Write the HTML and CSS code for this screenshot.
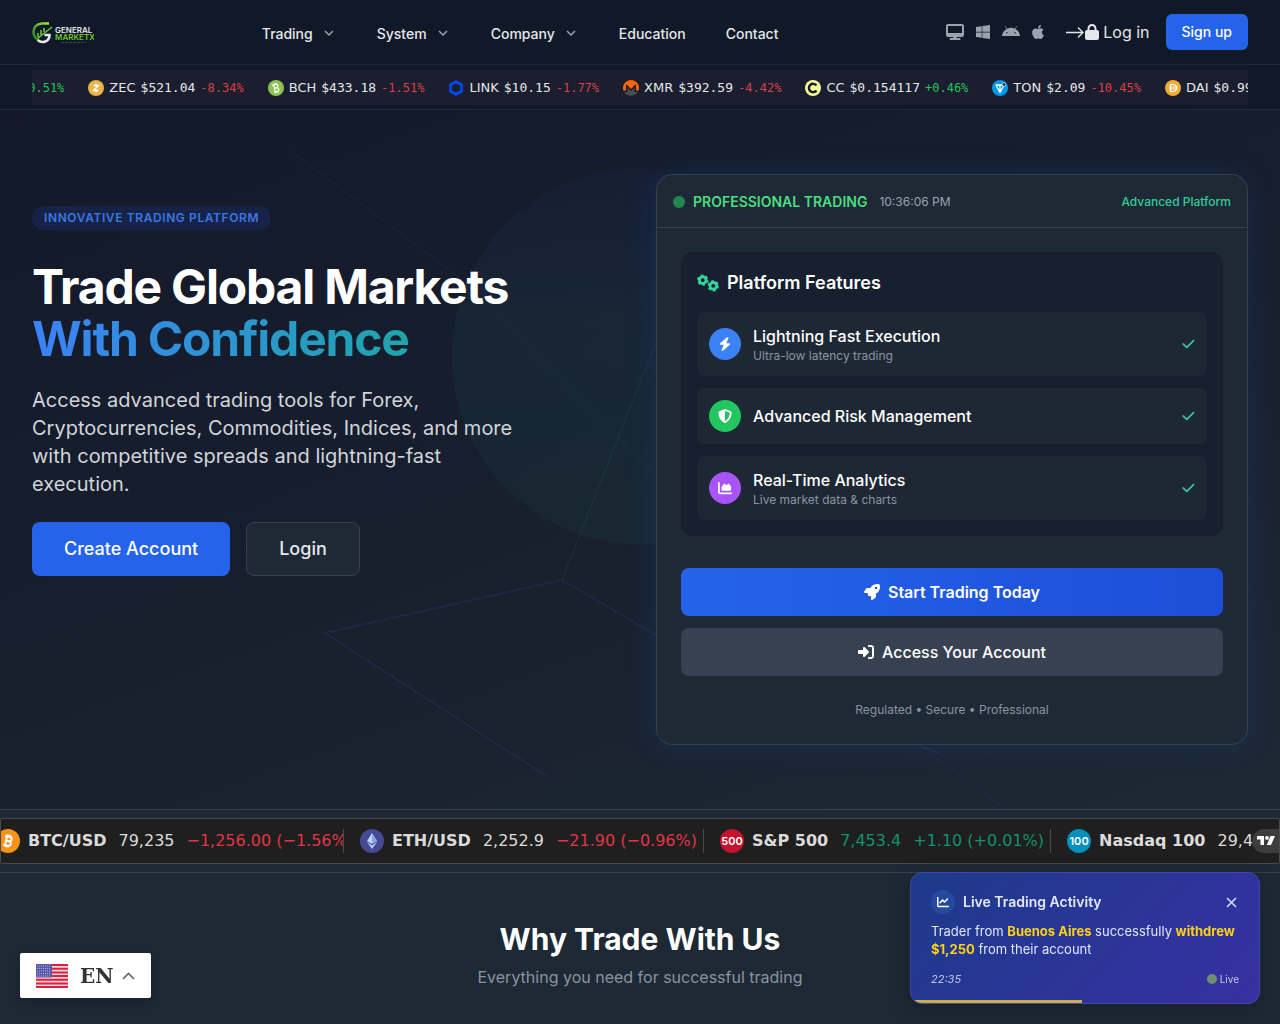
FILE: index.html
```html
<!DOCTYPE html>
<html lang="en">
<head>
  <meta charset="UTF-8">
  <meta name="viewport" content="width=device-width, initial-scale=1.0">
  <title>General MarketX</title>
  <link rel="stylesheet" href="styles.css">
</head>
<body>
  <header class="header">
    <a href="#" class="logo" aria-label="General MarketX">
      <svg width="62" height="24" viewBox="0 0 62 24">
        <defs>
          <linearGradient id="logoGreen" x1="0" y1="1" x2="1" y2="0">
            <stop offset="0" stop-color="#1f7a2e"/>
            <stop offset="1" stop-color="#a3e635"/>
          </linearGradient>
        </defs>
        <path d="M17 3.500H10C4 4 1.500 8 1.500 12c0 4 2 6 4 7.500" fill="none" stroke="url(#logoGreen)" stroke-width="2.600"/>
        <path d="M5.500 20c5 4 12 1.500 12-5h-5" fill="none" stroke="#e5e7eb" stroke-width="2.600"/>
        <path d="M6 17v-4M9 15v-5M12 12V8M5 19L20 7" stroke="#65c32f" stroke-width="1.600"/>
        <text x="23" y="13" class="logo-name">GENERAL</text>
        <text x="23" y="20" class="logo-name logo-sub">MARKETX</text>
        <path d="M29 22.500h25" stroke="#3b4252" stroke-width="1" stroke-dasharray="3 1"/>
      </svg>
    </a>
    <nav class="nav">
      <a href="#">Trading <svg class="caret" viewBox="0 0 16 16"><path d="M4 5l4 4 4-4"/></svg></a>
      <a href="#">System <svg class="caret" viewBox="0 0 16 16"><path d="M4 5l4 4 4-4"/></svg></a>
      <a href="#">Company <svg class="caret" viewBox="0 0 16 16"><path d="M4 5l4 4 4-4"/></svg></a>
      <a href="#">Education</a>
      <a href="#">Contact</a>
    </nav>
    <div class="actions">
      <div class="platforms">
        <a href="#" aria-label="Desktop"><svg width="18" height="16" viewBox="0 0 576 512"><path fill-rule="evenodd" d="M64 0C28.700 0 0 28.700 0 64V352c0 35.300 28.700 64 64 64H240l-11 32H144c-18 0-32 14-32 32s14 32 32 32H432c18 0 32-14 32-32s-14-32-32-32H347l-11-32H512c35.300 0 64-28.700 64-64V64c0-35.300-28.700-64-64-64H64zM512 64V288H64V64H512z"/></svg></a>
        <a href="#" aria-label="Windows"><svg width="14" height="16" viewBox="0 0 448 512"><path d="M0 93.700l183.600-25.300v177.400H0V93.700zm0 324.600l183.600 25.300V268.400H0v149.900zm203.800 28L448 480V268.400H203.800v177.900zm0-380.600v180.100H448V32L203.800 65.700z"/></svg></a>
        <a href="#" aria-label="Android"><svg width="18" height="16" viewBox="0 0 576 512"><path d="M420.550,301.930a24,24,0,1,1,24-24,24,24,0,0,1-24,24m-265.100,0a24,24,0,1,1,24-24,24,24,0,0,1-24,24m273.700-144.480,47.940-83a10,10,0,1,0-17.270-10h0l-48.540,84.070a301.250,301.250,0,0,0-246.560,0L116.180,64.450a10,10,0,1,0-17.270,10h0l47.940,83C64.530,202.220,8.240,285.550,0,384H576c-8.240-98.450-64.540-181.780-146.850-226.550"/></svg></a>
        <a href="#" aria-label="Apple"><svg width="12" height="16" viewBox="0 0 384 512"><path d="M318.700 268.700c-.2-36.700 16.400-64.400 50-84.800-18.800-26.900-47.200-41.700-84.700-44.600-35.500-2.800-74.300 20.700-88.500 20.700-15 0-49.400-19.700-76.400-19.700C63.300 141.200 4 184.800 4 273.500q0 39.300 14.400 81.200c12.800 36.700 59 126.700 107.200 125.200 25.200-.6 43-17.900 75.800-17.900 31.800 0 48.300 17.900 76.400 17.900 48.600-.7 90.400-82.500 102.600-119.300-65.200-30.700-61.700-90-61.700-91.900zm-56.600-164.200c27.300-32.400 24.800-61.900 24-72.500-24.100 1.400-52 16.400-67.900 34.900-17.500 19.800-27.800 44.300-25.600 71.900 26.100 2 49.900-11.400 69.500-34.300z"/></svg></a>
      </div>
      <a href="#" class="login">
        <svg width="20" height="16" viewBox="0 0 20 16"><path d="M1 8.500h17M13 3.500l5 5-5 5" fill="none" stroke="#e5e7eb" stroke-width="1.300"/></svg>
        <svg width="14" height="16" viewBox="0 0 448 512"><path fill="#e5e7eb" d="M144 144v48H304V144c0-44.200-35.800-80-80-80s-80 35.800-80 80zM80 192V144C80 64.500 144.500 0 224 0s144 64.500 144 144v48h16c35.300 0 64 28.700 64 64V448c0 35.300-28.700 64-64 64H64c-35.300 0-64-28.700-64-64V256c0-35.300 28.700-64 64-64H80z"/></svg>
        <span>Log in</span>
      </a>
      <a href="#" class="signup">Sign up</a>
    </div>
  </header>

  <div class="crypto-bar">
    <div class="crypto-window">
      <div class="crypto-track">
        <div class="coin"><span class="chg up">+0.51%</span></div>
        <div class="coin">
          <svg viewBox="0 0 16 16"><circle cx="8" cy="8" r="8" fill="#ecb244"/><path d="M5.500 5.500h5L5.500 10.500h5M8 3.500v2M8 10.500v2" fill="none" stroke="#fff" stroke-width="1.500"/></svg>
          <span>ZEC</span><span class="price">$521.04</span><span class="chg down">-8.34%</span>
        </div>
        <div class="coin">
          <svg viewBox="0 0 16 16"><circle cx="8" cy="8" r="8" fill="#8dc351"/><path transform="rotate(-14 8 8)" d="M5 4.500h3.500a1.700 1.700 0 0 1 0 3.500H6.500M8.500 8a1.800 1.800 0 0 1 0 3.600H5M6.500 4.500v7M7 3v1.500M9 3v1.500M7 11.500V13M9 11.500V13" fill="none" stroke="#fff" stroke-width="1.200"/></svg>
          <span>BCH</span><span class="price">$433.18</span><span class="chg down">-1.51%</span>
        </div>
        <div class="coin">
          <svg viewBox="0 0 16 16"><path d="M8 1.700l5.500 3.200v6.200L8 14.300l-5.500-3.200V4.900z" fill="none" stroke="#0847f7" stroke-width="2.800"/></svg>
          <span>LINK</span><span class="price">$10.15</span><span class="chg down">-1.77%</span>
        </div>
        <div class="coin">
          <svg viewBox="0 0 16 16"><path d="M8 0a8 8 0 0 0-7.600 10.500H3V4l5 5 5-5v6.500h2.600A8 8 0 0 0 8 0z" fill="#f60"/><path d="M1.200 12H4.500V7.500L8 11l3.500-3.500V12h3.300A8 8 0 0 1 1.200 12z" fill="#4c4c4c"/></svg>
          <span>XMR</span><span class="price">$392.59</span><span class="chg down">-4.42%</span>
        </div>
        <div class="coin">
          <svg viewBox="0 0 16 16"><circle cx="8" cy="8" r="8" fill="#f3ff97"/><path d="M11.500 5.500a4.200 4.200 0 1 0 0 5" fill="none" stroke="#111827" stroke-width="2.400"/></svg>
          <span>CC</span><span class="price">$0.154117</span><span class="chg up">+0.46%</span>
        </div>
        <div class="coin">
          <svg viewBox="0 0 16 16"><circle cx="8" cy="8" r="8" fill="#0098ea"/><path d="M4 5h8L8 12.500zM8 5v7" fill="none" stroke="#fff" stroke-width="1.300" stroke-linejoin="round"/><circle cx="12" cy="4.500" r="1.800" fill="#12314d" stroke="#fff" stroke-width=".6"/></svg>
          <span>TON</span><span class="price">$2.09</span><span class="chg down">-10.45%</span>
        </div>
        <div class="coin">
          <svg viewBox="0 0 16 16"><circle cx="8" cy="8" r="8" fill="#f5ac37"/><path d="M5.500 4.500h2.500a3.500 3.500 0 0 1 0 7H5.500zM4 7h8.500M4 9h8.500" fill="none" stroke="#fff" stroke-width="1.100"/></svg>
          <span>DAI</span><span class="price">$0.9998</span><span class="chg up">+0.01%</span>
        </div>
      </div>
    </div>
  </div>

  <main>
    <section class="hero">
      <svg class="hero-art" width="1280" height="699" viewBox="0 0 1280 699">
        <defs>
          <linearGradient id="orb" x1="0" y1="0" x2="0" y2="1">
            <stop offset="0" stop-color="#2563eb" stop-opacity=".04"/>
            <stop offset=".4" stop-color="#2b8aa0" stop-opacity=".08"/>
            <stop offset="1" stop-color="#10b981" stop-opacity=".05"/>
          </linearGradient>
        </defs>
        <circle cx="640" cy="246" r="188" fill="url(#orb)"/>
        <g fill="none" stroke-opacity=".1">
          <path d="M288 39L460 168L670 380" stroke="#3b82f6"/>
          <path d="M562 470L656 232L680 170" stroke="#5eb0a8"/>
          <path d="M548 667L325 523L562 470L656 525L940 644" stroke="#6366f1" stroke-width="2"/>
          <path d="M900 620L1005 699" stroke="#6366f1"/>
        </g>
      </svg>

      <div class="intro">
        <span class="tag">INNOVATIVE TRADING PLATFORM</span>
        <h1>Trade Global Markets<br><span class="gradient-text">With Confidence</span></h1>
        <p>Access advanced trading tools for Forex, Cryptocurrencies, Commodities, Indices, and more with competitive spreads and lightning-fast execution.</p>
        <div class="intro-buttons">
          <a href="#" class="btn-primary">Create Account</a>
          <a href="#" class="btn-outline">Login</a>
        </div>
      </div>

      <div class="card">
        <div class="card-header">
          <span class="pulse"></span>
          <span class="card-title">PROFESSIONAL TRADING</span>
          <span class="clock">10:36:06 PM</span>
          <span class="card-note">Advanced Platform</span>
        </div>
        <div class="card-body">
          <div class="features">
            <h3>
              <svg width="22" height="18" viewBox="0 0 23 18" fill="none" stroke="#34d399">
                <circle cx="6" cy="6" r="3.500" stroke-width="3"/>
                <circle cx="6" cy="6" r="5" stroke-width="2" stroke-dasharray="2.600 2.640"/>
                <circle cx="17" cy="12" r="3.500" stroke-width="3"/>
                <circle cx="17" cy="12" r="5" stroke-width="2" stroke-dasharray="2.600 2.640"/>
              </svg>
              Platform Features
            </h3>
            <div class="feature">
              <span class="feature-icon blue"><svg width="12" height="14" viewBox="0 0 448 512"><path d="M349.400 44.600c5.900-13.700 1.500-29.700-10.600-38.500s-28.600-8-39.900 1.800l-256 224c-10 8.800-13.600 22.900-8.900 35.300S50.700 288 64 288H175.500L98.600 467.400c-5.900 13.700-1.500 29.700 10.600 38.500s28.600 8 39.900-1.800l256-224c10-8.800 13.600-22.900 8.900-35.300s-16.600-20.700-30-20.700H272.500L349.400 44.600z"/></svg></span>
              <div>
                <h4>Lightning Fast Execution</h4>
                <p>Ultra-low latency trading</p>
              </div>
              <svg class="check" viewBox="0 0 448 512"><path d="M438.600 105.400c12.500 12.500 12.500 32.800 0 45.300l-256 256c-12.500 12.500-32.800 12.500-45.300 0l-128-128c-12.500-12.500-12.500-32.800 0-45.300s32.800-12.500 45.300 0L160 338.700 393.400 105.400c12.500-12.500 32.800-12.500 45.300 0z"/></svg>
            </div>
            <div class="feature">
              <span class="feature-icon green"><svg width="14" height="14" viewBox="0 0 512 512"><path d="M256 0c4.600 0 9.200 1 13.400 2.900L457.700 82.800c22 9.300 38.400 31 38.300 57.200c-.5 99.200-41.300 280.700-213.600 363.200c-16.700 8-36.100 8-52.800 0C57.300 420.700 16.500 239.200 16 140c-.1-26.200 16.300-47.900 38.300-57.200L242.700 2.900C246.800 1 251.400 0 256 0zm0 66.800V444.800C394 378 431.100 230.100 432 141.400L256 66.800z"/></svg></span>
              <div>
                <h4>Advanced Risk Management</h4>
              </div>
              <svg class="check" viewBox="0 0 448 512"><path d="M438.600 105.400c12.500 12.500 12.500 32.800 0 45.300l-256 256c-12.500 12.500-32.800 12.500-45.300 0l-128-128c-12.500-12.500-12.500-32.800 0-45.300s32.800-12.500 45.300 0L160 338.700 393.400 105.400c12.500-12.500 32.800-12.500 45.300 0z"/></svg>
            </div>
            <div class="feature">
              <span class="feature-icon purple"><svg width="14" height="14" viewBox="0 0 512 512"><path d="M64 64c0-17.700-14.300-32-32-32S0 46.300 0 64V400c0 44.200 35.800 80 80 80H480c17.700 0 32-14.300 32-32s-14.300-32-32-32H80c-8.800 0-16-7.200-16-16V64zM128 236v84c0 18 14 32 32 32H448c18 0 32-14 32-32V218c0-7-2-13-6-18l-68-86c-11-14-32-15-44-3l-42 42-70-49c-13-9-30-7-40 5l-74 103c-6 7-8 15-8 24z"/></svg></span>
              <div>
                <h4>Real-Time Analytics</h4>
                <p>Live market data &amp; charts</p>
              </div>
              <svg class="check" viewBox="0 0 448 512"><path d="M438.600 105.400c12.500 12.500 12.500 32.800 0 45.300l-256 256c-12.500 12.500-32.800 12.500-45.300 0l-128-128c-12.500-12.500-12.500-32.800 0-45.300s32.800-12.500 45.300 0L160 338.700 393.400 105.400c12.500-12.500 32.800-12.500 45.300 0z"/></svg>
            </div>
          </div>
          <div class="card-buttons">
            <a href="#" class="btn-wide start"><svg width="16" height="16" viewBox="0 0 512 512"><path d="M156.600 384.900L125.700 354c-8.500-8.500-11.500-20.800-7.700-32.200c3-8.900 7-20.500 11.800-33.800H24c-8.600 0-16.600-4.600-20.900-12.100s-4.200-16.700 .2-24.100l52.500-88.500c13-21.900 36.500-35.300 61.900-35.300l82.300 0c2.400-4 4.800-7.700 7.200-11.300C289.100-4.100 411.100-8.100 483.900 5.300c11.600 2.100 20.600 11.200 22.800 22.800c13.400 72.900 9.300 194.800-111.400 276.700c-3.500 2.400-7.300 4.800-11.300 7.200v82.300c0 25.400-13.400 49-35.300 61.900l-88.500 52.500c-7.400 4.400-16.600 4.500-24.100 .2s-12.100-12.200-12.100-20.900V380.800c-14.100 4.900-26.400 8.900-35.700 11.900c-11.200 3.600-23.400 .5-31.800-7.800zM384 168a40 40 0 1 0 0-80 40 40 0 1 0 0 80z"/></svg>Start Trading Today</a>
            <a href="#" class="btn-wide access"><svg width="16" height="16" viewBox="0 0 512 512"><path d="M217.900 105.900L340.700 228.700c7.200 7.200 11.300 17.100 11.300 27.300s-4.100 20.100-11.300 27.300L217.900 406.100c-6.400 6.400-15 9.900-24 9.900c-18.700 0-33.900-15.200-33.900-33.900l0-62.100L32 320c-17.700 0-32-14.300-32-32l0-64c0-17.700 14.300-32 32-32l128 0 0-62.100c0-18.700 15.200-33.900 33.900-33.900c9 0 17.600 3.600 24 9.900zM352 416l64 0c17.700 0 32-14.300 32-32l0-256c0-17.700-14.300-32-32-32l-64 0c-17.700 0-32-14.300-32-32s14.300-32 32-32l64 0c53 0 96 43 96 96l0 256c0 53-43 96-96 96l-64 0c-17.700 0-32-14.300-32-32s14.300-32 32-32z"/></svg>Access Your Account</a>
          </div>
          <p class="card-foot">Regulated • Secure • Professional</p>
        </div>
      </div>
    </section>

    <section class="market">
      <div class="market-tape">
        <div class="market-track">
          <div class="quote quote-cut">
            <svg viewBox="0 0 24 24"><circle cx="12" cy="12" r="12" fill="#f7931a"/><path transform="rotate(12 12 12)" d="M8 7.500h5a2.200 2.200 0 0 1 0 4.500h-3M13 12a2.300 2.300 0 0 1 0 4.600H8M10 7.500v9M10.500 5.500v2M13 5.500v2M10.500 16.500v2M13 16.500v2" fill="none" stroke="#fff" stroke-width="1.900"/></svg>
            <b>BTC/USD</b><span>79,235</span><span class="loss">−1,256.00 (−1.56%)</span>
          </div>
          <div class="quote">
            <svg viewBox="0 0 24 24"><circle cx="12" cy="12" r="12" fill="#454a95"/><path d="M12 4l5 8.200-5 2.900-5-2.900z" fill="#c3d5f5"/><path d="M12 4l5 8.200-5 2.900z" fill="#8aa6e4"/><path d="M12 16.200l5-3L12 20l-5-6.800z" fill="#b4c8f0"/></svg>
            <b>ETH/USD</b><span>2,252.9</span><span class="loss">−21.90 (−0.96%)</span>
          </div>
          <div class="quote">
            <span class="index-badge sp">500</span>
            <b>S&amp;P 500</b><span class="gain">7,453.4</span><span class="gain">+1.10 (+0.01%)</span>
          </div>
          <div class="quote">
            <span class="index-badge nq">100</span>
            <b>Nasdaq 100</b><span>29,416.5</span><span class="loss">−12.30 (−0.04%)</span>
          </div>
        </div>
        <a href="#" class="tv" aria-label="TradingView"><svg width="18" height="10" viewBox="0 0 18 10"><path d="M0 0h7v9H3.500V3.500H0zM13.500 0H18l-4 9H9.800z" fill="#fff"/><circle cx="10" cy="1.900" r="1.900" fill="#fff"/></svg></a>
      </div>
    </section>

    <section class="why">
      <h2>Why Trade With Us</h2>
      <p>Everything you need for successful trading</p>
    </section>
  </main>

  <div class="toast">
    <div class="toast-head">
      <span class="toast-icon"><svg width="12" height="12" viewBox="0 0 512 512"><path d="M64 64c0-17.700-14.300-32-32-32S0 46.300 0 64V400c0 44.200 35.800 80 80 80H480c17.700 0 32-14.300 32-32s-14.300-32-32-32H80c-8.800 0-16-7.200-16-16V64zm406.600 86.600c12.500-12.500 12.500-32.800 0-45.300s-32.800-12.500-45.300 0L320 210.700l-57.400-57.400c-12.500-12.500-32.800-12.500-45.300 0l-112 112c-12.500 12.500-12.500 32.800 0 45.300s32.800 12.500 45.300 0L240 221.300l57.400 57.400c12.500 12.500 32.800 12.500 45.300 0l128-128z"/></svg></span>
      <span class="toast-title">Live Trading Activity</span>
      <button class="toast-close" aria-label="Close"><svg width="11" height="11" viewBox="0 0 11 11"><path d="M1 1l9 9M10 1l-9 9" stroke="#cbd5f5" stroke-width="1.700"/></svg></button>
    </div>
    <p class="toast-text">Trader from <b>Buenos Aires</b> successfully <b>withdrew $1,250</b> from their account</p>
    <div class="toast-foot">
      <i>22:35</i>
      <span class="live"><span class="live-dot"></span>Live</span>
    </div>
    <div class="toast-progress"></div>
  </div>

  <button class="lang">
    <svg width="32" height="24" viewBox="0 0 32 24">
      <rect width="32" height="24" fill="#f3d3da"/>
      <path d="M0 1h32M0 4.700h32M0 8.400h32M0 12h32M0 15.700h32M0 19.400h32M0 23h32" stroke="#d8233f" stroke-width="2"/>
      <rect width="16" height="13.500" fill="#5a5ba8"/>
      <path d="M1 2h14M1 4.500h14M1 7h14M1 9.500h14M1 12h14" stroke="#a9abd8" stroke-width="1" stroke-dasharray="1 1"/>
    </svg>
    <span>EN</span>
    <svg width="13" height="8" viewBox="0 0 13 8"><path d="M1 7l5.500-5.500L12 7" fill="none" stroke="#666" stroke-width="1.600"/></svg>
  </button>
</body>
</html>
```

FILE: styles.css
```css
* {
  box-sizing: border-box;
}
body {
  margin: 0;
  min-height: 100vh;
  font-family: Inter, "Liberation Sans", sans-serif;
  font-size: 16px;
  line-height: 24px;
  color: #fff;
  background-color: #1e2936;
  overflow: hidden;
}
a {
  color: inherit;
  text-decoration: none;
}
h1, h2, h3, h4, p {
  margin: 0;
}
svg {
  display: block;
  flex-shrink: 0;
}

/* header */
.header {
  display: flex;
  justify-content: space-between;
  align-items: center;
  height: 65px;
  padding: 0 32px;
  background-color: #111827;
  border-bottom: 1px solid #1f2937;
}
.logo-name {
  font-family: Inter, sans-serif;
  font-size: 8px;
  font-weight: 600;
  fill: #e5e7eb;
}
.logo-sub {
  fill: #6cc52c;
}
.nav {
  display: flex;
  align-items: center;
  gap: 40px;
  padding-top: 4px;
  font-size: 14px;
  font-weight: 500;
  line-height: 20px;
  color: #e5e7eb;
}
.nav a {
  display: flex;
  align-items: center;
  gap: 8px;
}
.caret {
  width: 16px;
  height: 16px;
  fill: none;
  stroke: #9ca3af;
  stroke-width: 1.5;
}
.actions {
  display: flex;
  align-items: center;
}
.platforms {
  display: flex;
  gap: 12px;
  margin-right: 21px;
  fill: #9ca3af;
}
.login {
  display: flex;
  align-items: center;
  margin-right: 16px;
  color: #e5e7eb;
}
.login span {
  margin-left: 4px;
}
.signup {
  padding: 8px 16px;
  border-radius: 6px;
  background-color: #2563eb;
  font-size: 14px;
  font-weight: 500;
  line-height: 20px;
}

/* crypto prices */
.crypto-bar {
  padding: 5px 32px 4px;
  background-color: #111827;
  border-bottom: 1px solid #1f2937;
}
.crypto-window {
  overflow: hidden;
  background-color: #1b1e2e;
}
.crypto-track {
  display: flex;
  gap: 24px;
  height: 35px;
  margin-left: -11px;
}
.coin {
  display: flex;
  align-items: center;
  gap: 5px;
  white-space: nowrap;
  font-family: "DejaVu Sans", sans-serif;
  font-size: 13px;
  color: #e5e7eb;
}
.coin svg {
  width: 16px;
  height: 16px;
}
.price {
  font-family: "DejaVu Sans Mono", monospace;
}
.chg {
  font-family: "DejaVu Sans Mono", monospace;
  font-size: 12px;
}
.up {
  color: #22c55e;
}
.down {
  color: #dc4046;
}

/* hero */
.hero {
  position: relative;
  display: grid;
  grid-template-columns: 1fr 1fr;
  gap: 32px;
  padding: 64px 32px;
  overflow: hidden;
  background: linear-gradient(160deg, #131929 0%, #171e2d 45%, #1e2835 100%);
}
.hero-art {
  position: absolute;
  top: 0;
  left: 0;
}
.intro {
  position: relative;
  padding-top: 32px;
}
.tag {
  display: inline-block;
  padding: 0 12px;
  border-radius: 12px;
  background-color: #172346;
  color: #3b76e4;
  font-size: 12px;
  font-weight: 600;
  letter-spacing: 0.05em;
  vertical-align: top;
}
h1 {
  margin-top: 31px;
  font-size: 48px;
  font-weight: 700;
  line-height: 52px;
  letter-spacing: -0.025em;
}
.gradient-text {
  background: linear-gradient(to right, #3b82f6, #10b981);
  background-size: 592px 100%;
  -webkit-background-clip: text;
  background-clip: text;
  color: transparent;
}
.intro p {
  max-width: 500px;
  margin-top: 21px;
  font-size: 20px;
  line-height: 28px;
  color: #d1d5db;
}
.intro-buttons {
  display: flex;
  gap: 16px;
  margin-top: 24px;
  font-size: 18px;
  font-weight: 500;
  line-height: 28px;
}
.btn-primary {
  padding: 13px 32px;
  border-radius: 8px;
  background-color: #2563eb;
}
.btn-outline {
  padding: 12px 32px;
  border: 1px solid #374151;
  border-radius: 8px;
  background-color: #1e2936;
  color: #e5e7eb;
}

.card {
  position: relative;
  border: 1px solid #334253;
  border-radius: 16px;
  background-color: #1e2936;
  box-shadow: 0 0 30px rgba(37, 99, 235, 0.16);
}
.card-header {
  display: flex;
  align-items: center;
  height: 53px;
  padding: 2px 16px 0;
  border-bottom: 1px solid #334253;
}
.pulse {
  width: 12px;
  height: 12px;
  margin-right: 8px;
  border-radius: 50%;
  background-color: #23864f;
}
.card-title {
  margin-right: 12px;
  font-size: 14px;
  font-weight: 600;
  color: #4ade80;
}
.clock {
  font-size: 12px;
  color: #9ca3af;
}
.card-note {
  margin-left: auto;
  font-size: 12px;
  font-weight: 500;
  color: #34c99a;
}
.card-body {
  padding: 24px;
}
.features {
  display: flex;
  flex-direction: column;
  gap: 12px;
  padding: 16px;
  border-radius: 12px;
  background-color: #181f2e;
}
.features h3 {
  display: flex;
  align-items: center;
  gap: 8px;
  margin-bottom: 4px;
  padding-top: 1px;
  font-size: 18px;
  font-weight: 600;
  line-height: 27px;
}
.feature {
  display: flex;
  align-items: center;
  gap: 12px;
  padding: 12px;
  border-radius: 8px;
  background-color: #1e2835;
}
.feature-icon {
  display: flex;
  align-items: center;
  justify-content: center;
  width: 32px;
  height: 32px;
  border-radius: 50%;
  fill: #fff;
}
.blue {
  background-color: #3b82f6;
}
.green {
  background-color: #22c55e;
}
.purple {
  background-color: #a855f7;
}
.feature h4 {
  font-size: 16px;
  font-weight: 500;
}
.feature p {
  font-size: 12px;
  line-height: 16px;
  color: #8b93a0;
}
.check {
  width: 13px;
  height: 14px;
  margin-left: auto;
  fill: #34d399;
}
.card-buttons {
  display: grid;
  gap: 12px;
  margin-top: 32px;
}
.btn-wide {
  display: flex;
  align-items: center;
  justify-content: center;
  gap: 8px;
  padding: 12px;
  border-radius: 8px;
  font-weight: 600;
  fill: #fff;
}
.start {
  background: linear-gradient(to right, #2563eb, #1d4ed8);
}
.access {
  background-color: #374151;
  font-weight: 500;
}
.card-foot {
  margin-top: 24px;
  text-align: center;
  font-size: 12px;
  line-height: 20px;
  color: #8b93a0;
}

/* market tape */
.market {
  padding: 8px 0;
  border-top: 1px solid #334253;
  border-bottom: 1px solid #334253;
}
.market-tape {
  position: relative;
  overflow: hidden;
  height: 46px;
  border: 1px solid #464c4b;
  border-radius: 2px;
  background-color: #1f1f1f;
}
.market-track {
  display: flex;
  align-items: center;
  gap: 16px;
  height: 44px;
  margin-left: -5px;
}
.quote {
  display: flex;
  align-items: center;
  flex-shrink: 0;
  gap: 12px;
  padding-right: 6px;
  border-right: 1px solid #4a4a4a;
  overflow: hidden;
  white-space: nowrap;
  font-family: "DejaVu Sans", sans-serif;
  color: #dbdbdb;
}
.quote svg,
.index-badge {
  width: 24px;
  height: 24px;
  margin-right: -4px;
}
.quote-cut {
  width: 348px;
  padding-right: 0;
}
.index-badge {
  border-radius: 50%;
  text-align: center;
  font-family: Inter, sans-serif;
  font-size: 11px;
  font-weight: 600;
  color: #fff;
}
.sp {
  background-color: #c4122f;
}
.nq {
  background-color: #0090ba;
}
.loss {
  color: #e03547;
}
.gain {
  color: #0f9270;
}
.tv {
  position: absolute;
  top: 10px;
  right: -1px;
  display: flex;
  align-items: center;
  width: 28px;
  height: 24px;
  padding-left: 5px;
  border-radius: 12px 0 0 12px;
  background-color: #3d3d3d;
}

.why {
  padding: 48px 32px;
  text-align: center;
}
.why h2 {
  font-size: 30px;
  font-weight: 700;
  line-height: 36px;
}
.why p {
  margin-top: 8px;
  color: #8b93a0;
}

/* activity popup */
.toast {
  position: fixed;
  right: 20px;
  bottom: 20px;
  width: 350px;
  padding: 17px 20px 15px;
  overflow: hidden;
  border: 1px solid #3f46ac;
  border-radius: 12px;
  background: linear-gradient(135deg, #1e3a8a, #3730a3);
  box-shadow: 0 8px 24px rgba(0, 0, 0, 0.2);
}
.toast-head {
  display: flex;
  align-items: center;
  gap: 8px;
}
.toast-icon {
  display: flex;
  align-items: center;
  justify-content: center;
  width: 24px;
  height: 24px;
  border-radius: 50%;
  background-color: #264a9f;
  fill: #fff;
}
.toast-title {
  font-size: 14px;
  font-weight: 600;
  color: #e0e7ff;
}
.toast-close {
  margin-left: auto;
  padding: 2px;
  border: 0;
  background: none;
  cursor: pointer;
}
.toast-text {
  margin-top: 8px;
  font-size: 13px;
  line-height: 18px;
  color: #e0e7ff;
}
.toast-text b {
  font-weight: 700;
  color: #fcd116;
}
.toast-foot {
  display: flex;
  justify-content: space-between;
  align-items: center;
  margin-top: 12px;
  font-size: 11px;
  line-height: 18px;
  color: #bfc5ea;
}
.live {
  display: flex;
  align-items: center;
  gap: 3px;
  font-size: 10px;
}
.live-dot {
  width: 10px;
  height: 10px;
  border-radius: 50%;
  background-color: #6b8f70;
}
.toast-progress {
  position: absolute;
  left: 0;
  bottom: 0;
  width: 49%;
  height: 3px;
  background-color: #ccaf3f;
}

/* language switcher */
.lang {
  position: fixed;
  left: 20px;
  bottom: 26px;
  display: flex;
  align-items: center;
  height: 45px;
  padding: 0 16px;
  border: 0;
  border-radius: 2px;
  background-color: #fff;
  box-shadow: 0 4px 12px rgba(0, 0, 0, 0.2);
  font-family: "DejaVu Serif", serif;
  font-size: 20px;
  font-weight: 700;
  color: #333;
  cursor: pointer;
}
.lang span {
  margin: 0 8px 0 12px;
}
```
